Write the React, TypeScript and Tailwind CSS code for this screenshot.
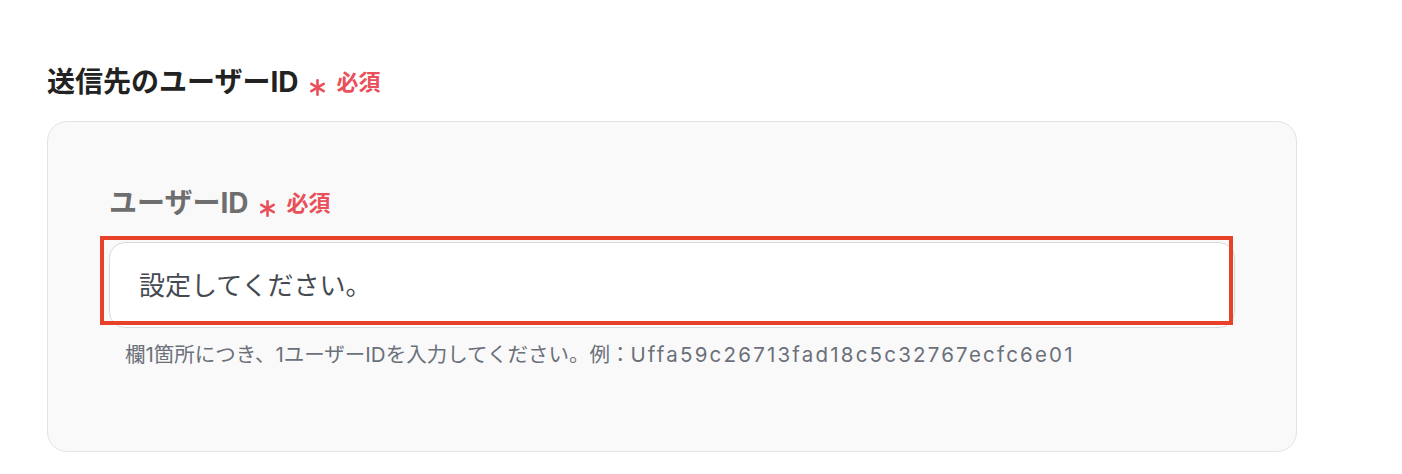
import React from 'react';

const FONT = 'Inter, "Noto Sans CJK JP", sans-serif';

function Asterisk() {
  return (
    <svg width="15" height="17" viewBox="0 0 15 17" className="translate-y-[5px]" aria-hidden>
      <g stroke="currentColor" strokeWidth="2.6" strokeLinecap="round">
        <line x1="7.5" y1="1.3" x2="7.5" y2="15.7" />
        <line x1="1.3" y1="4.9" x2="13.7" y2="12.1" />
        <line x1="13.7" y1="4.9" x2="1.3" y2="12.1" />
      </g>
    </svg>
  );
}

function Required() {
  return (
    <span className="ml-[11px] inline-flex items-center text-[#e9505a]">
      <Asterisk />
      <span className="ml-[12px] text-[22px] font-bold">必須</span>
    </span>
  );
}

export default function App() {
  return (
    <div className="min-h-screen bg-white pl-[47px] pr-[105px] pt-[62px]" style={{ fontFamily: FONT }}>
      <h2 className="flex items-center text-[28px] font-bold leading-[40px] text-[#222]">
        送信先のユーザーID
        <Required />
      </h2>

      <div className="mt-[19px] rounded-[20px] border border-[#e3e3e3] bg-[#f9f9f9] px-[61px] pt-[61px] pb-[82px]">
        <label className="flex items-center text-[28px] font-bold leading-[40px] text-[#6e6e6e]">
          ユーザーID
          <Required />
        </label>

        <div className="relative mt-[19px]">
          <div className="flex h-[86px] items-center rounded-[16px] border border-[#d7d9dd] bg-white pl-[29px] text-[26px] text-[#454a52]">
            設定してください。
          </div>
          {/* annotation overlay */}
          <div className="pointer-events-none absolute left-[-9px] right-[2px] top-[-6px] h-[89px] border-[4px] border-[#e8412a]" />
        </div>

        <p className="mt-[13px] pl-[16px] text-[20.5px] leading-[28px] text-[#6b7079]">
          欄1箇所につき、1ユーザーIDを入力してください。例：
          <span className="tracking-[2.2px]">Uffa59c26713fad18c5c32767ecfc6e01</span>
        </p>
      </div>
    </div>
  );
}
